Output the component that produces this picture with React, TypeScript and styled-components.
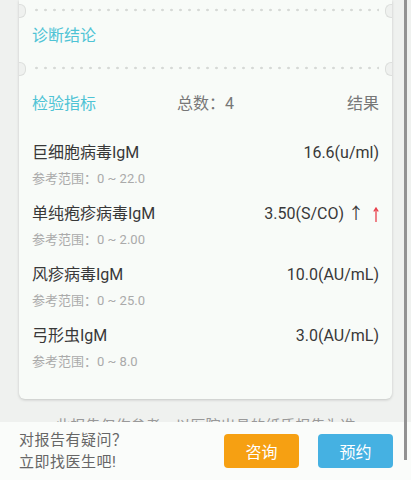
import styled, { createGlobalStyle } from "styled-components";

const GlobalStyle = createGlobalStyle`
  html, body {
    margin: 0;
    padding: 0;
    background: #eff1ef;
    overflow: hidden;
  }
  * {
    box-sizing: border-box;
  }
`;

const PAGE_BG = "#eff1ef";

interface ITestItem {
  id: number;
  name: string;
  value: string;
  range: string;
  high?: boolean;
}

const TEST_ITEMS: ITestItem[] = [
  { id: 1, name: "巨细胞病毒IgM", value: "16.6(u/ml)", range: "0 ~ 22.0" },
  { id: 2, name: "单纯疱疹病毒IgM", value: "3.50(S/CO) ↑", range: "0 ~ 2.00", high: true },
  { id: 3, name: "风疹病毒IgM", value: "10.0(AU/mL)", range: "0 ~ 25.0" },
  { id: 4, name: "弓形虫IgM", value: "3.0(AU/mL)", range: "0 ~ 8.0" },
];

const Page = styled.div`
  font-family: Roboto, "Noto Sans CJK SC", sans-serif;
  padding: 0 19px 80px;
  width: 411px;
`;

const Card = styled.div`
  background: #f8fbf8;
  border-radius: 0 0 6px 6px;
  box-shadow: 0 1px 3px rgba(0, 0, 0, 0.18);
  padding: 8px 0 28px;
`;

const Divider = styled.div`
  position: relative;
  height: 4px;
  padding: 0 13px;
  background-image: radial-gradient(circle, #d6d9d6 1px, transparent 1.6px);
  background-size: 9px 4px;
  background-origin: content-box;
  background-clip: content-box;

  &::before,
  &::after {
    content: "";
    position: absolute;
    top: -4px;
    width: 6px;
    height: 12px;
    background: ${PAGE_BG};
    border: 1px solid #dcdedc;
  }
  &::before {
    left: 0;
    border-left: none;
    border-radius: 0 6px 6px 0;
  }
  &::after {
    right: 0;
    border-right: none;
    border-radius: 6px 0 0 6px;
  }
`;

const SectionTitle = styled.div<{ $top: number; $bottom?: number }>`
  margin: ${(p) => p.$top}px 13px ${(p) => p.$bottom ?? 0}px;
  font-size: 16px;
  line-height: 22px;
  color: #4ec3d5;
`;

const HeaderRow = styled.div`
  display: grid;
  grid-template-columns: 1fr auto 1fr;
  align-items: center;
  margin: 23px 13px 27px;
  font-size: 16px;
  line-height: 22px;
`;

const HeaderLabel = styled.span`
  color: #4ec3d5;
`;

const HeaderCount = styled.span`
  color: #777;
`;

const HeaderResult = styled.span`
  color: #777;
  text-align: right;
`;

const ItemList = styled.div`
  display: flex;
  flex-direction: column;
  gap: 15px;
  padding: 0 13px;
`;

const Item = styled.div`
  display: flex;
  flex-direction: column;
  gap: 6px;
`;

const ItemTop = styled.div`
  display: flex;
  justify-content: space-between;
  align-items: center;
  font-size: 16px;
  line-height: 22px;
  color: #383838;
`;

const ItemValue = styled.span`
  display: flex;
  align-items: center;
`;

const HighMark = styled.svg`
  margin-left: 9px;
  width: 6px;
  height: 15px;
`;

const ItemRange = styled.div`
  font-size: 13px;
  line-height: 18px;
  color: #aaa;
`;

const Disclaimer = styled.div`
  margin-top: 17px;
  text-align: center;
  font-size: 15px;
  line-height: 20px;
  color: #999;
`;

const BottomBar = styled.div`
  position: fixed;
  left: 0;
  right: 0;
  bottom: 0;
  height: 58px;
  display: flex;
  align-items: center;
  padding: 0 18px 0 19px;
  background: #fafcfa;
  font-family: Roboto, "Noto Sans CJK SC", sans-serif;
`;

const AskText = styled.div`
  flex: 1;
  font-size: 15px;
  line-height: 22px;
  color: #666;
  letter-spacing: 0.5px;
`;

const ActionButton = styled.button<{ $color: string }>`
  width: 75px;
  height: 34px;
  margin-left: 19px;
  border: none;
  border-radius: 4px;
  background: ${(p) => p.$color};
  color: #fff;
  font-family: inherit;
  font-size: 16px;
`;

const ScrollThumb = styled.div`
  position: fixed;
  top: 0;
  right: 4px;
  width: 3px;
  height: 460px;
  background: #929292;
  z-index: 2;
`;

const App = () => {
  return (
    <>
      <GlobalStyle />
      <Page>
        <Card>
          <Divider />
          <SectionTitle $top={13} $bottom={19}>
            诊断结论
          </SectionTitle>
          <Divider />
          <HeaderRow>
            <HeaderLabel>检验指标</HeaderLabel>
            <HeaderCount>总数：4</HeaderCount>
            <HeaderResult>结果</HeaderResult>
          </HeaderRow>
          <ItemList>
            {TEST_ITEMS.map((item) => (
              <Item key={item.id}>
                <ItemTop>
                  <span>{item.name}</span>
                  <ItemValue>
                    {item.value}
                    {item.high && (
                      <HighMark viewBox="0 0 6 15">
                        <path
                          d="M3 15V1.5M0.8 4.5L3 1 5.2 4.5"
                          stroke="#e8404c"
                          strokeWidth="1.3"
                          fill="none"
                        />
                      </HighMark>
                    )}
                  </ItemValue>
                </ItemTop>
                <ItemRange>参考范围：{item.range}</ItemRange>
              </Item>
            ))}
          </ItemList>
        </Card>
        <Disclaimer>此报告仅作参考，以医院出具的纸质报告为准</Disclaimer>
      </Page>
      <BottomBar>
        <AskText>
          对报告有疑问？
          <br />
          立即找医生吧!
        </AskText>
        <ActionButton $color="#f6a012">咨询</ActionButton>
        <ActionButton $color="#45b1e2">预约</ActionButton>
      </BottomBar>
      <ScrollThumb />
    </>
  );
};

export default App;
